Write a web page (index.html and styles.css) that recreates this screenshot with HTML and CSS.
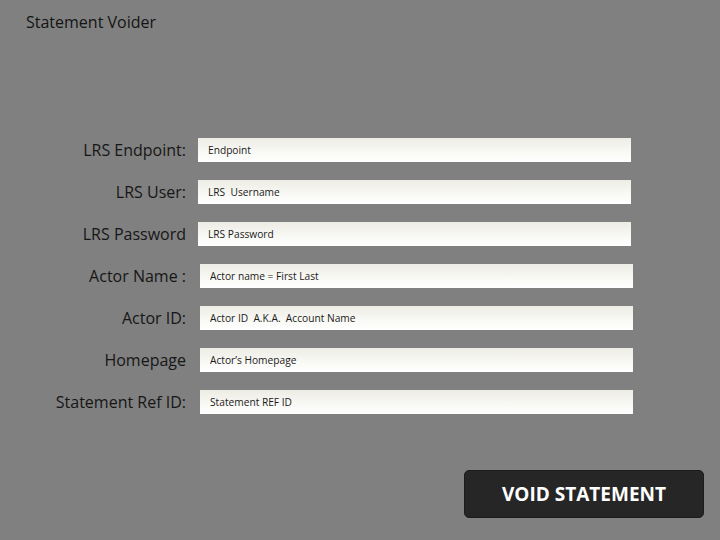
FILE: index.html
```html
<!DOCTYPE html>
<html>
<head>
<meta charset="utf-8">
<link rel="stylesheet" href="styles.css">
</head>
<body>
<div class="page">
  <div class="title">Statement Voider</div>
  <form class="form">
    <label class="label">LRS Endpoint:</label>
    <input class="field" type="text" value="Endpoint">
    <label class="label">LRS User:</label>
    <input class="field" type="text" value="LRS  Username">
    <label class="label">LRS Password</label>
    <input class="field" type="text" value="LRS Password">
    <label class="label">Actor Name :</label>
    <input class="field shifted" type="text" value="Actor name = First Last">
    <label class="label">Actor ID:</label>
    <input class="field shifted" type="text" value="Actor ID  A.K.A.  Account Name">
    <label class="label">Homepage</label>
    <input class="field shifted" type="text" value="Actor’s Homepage">
    <label class="label">Statement Ref ID:</label>
    <input class="field shifted" type="text" value="Statement REF ID">
  </form>
  <div class="actions">
    <button class="void-btn" type="button">VOID STATEMENT</button>
  </div>
</div>
</body>
</html>
```
FILE: styles.css
```css
html, body {
  margin: 0;
  padding: 0;
  background: #808080;
  width: 720px;
  height: 540px;
  overflow: hidden;
  font-family: "Open Sans", "Segoe UI", sans-serif;
}
.page {
  display: flex;
  flex-direction: column;
}
.title {
  padding: 11px 0 0 26px;
  font-size: 16px;
  line-height: 22px;
  color: #141414;
}
.form {
  margin: 105px 0 0 0;
  display: grid;
  grid-template-columns: 186px 433px;
  column-gap: 12px;
  row-gap: 18px;
  align-items: center;
}
.label {
  text-align: right;
  font-size: 16px;
  line-height: 24px;
  color: #161616;
  white-space: nowrap;
}
.field {
  box-sizing: border-box;
  width: 433px;
  height: 24px;
  margin: 0;
  border: none;
  outline: none;
  padding: 0 0 0 10px;
  font-family: "Open Sans", "Segoe UI", sans-serif;
  font-size: 10.2px;
  color: #1a1a1a;
  background: linear-gradient(to bottom, #edece4 0%, #f8f8f4 55%, #ffffff 100%);
}
.field.shifted {
  margin-left: 2px;
}
.actions {
  display: flex;
  justify-content: flex-end;
  padding: 56px 16px 0 0;
}
.void-btn {
  width: 240px;
  height: 48px;
  border: 1px solid #1c1c1c;
  border-radius: 5px;
  background: #262626;
  color: #ffffff;
  font-family: "Open Sans", "Segoe UI", sans-serif;
  font-weight: 700;
  font-size: 19px;
  padding: 0;
  cursor: pointer;
}
```
